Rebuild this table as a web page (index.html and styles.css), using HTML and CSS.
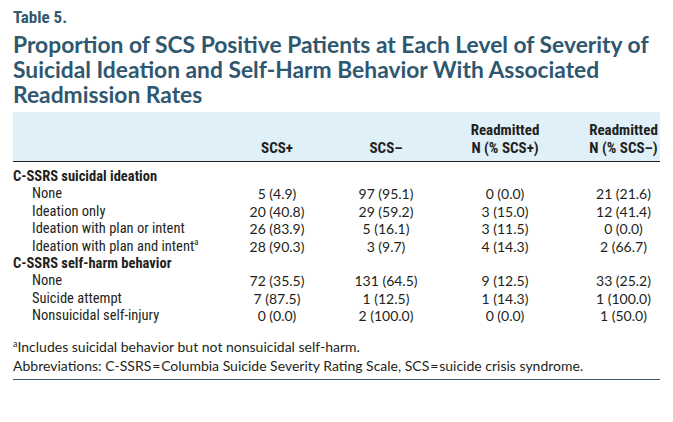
FILE: index.html
```html
<!DOCTYPE html>
<html>
<head>
<meta charset="utf-8">
<link rel="stylesheet" href="styles.css">
</head>
<body>
<div class="page">
  <div class="tlabel">Table 5.</div>
  <h1 class="title">Proportion of SCS Positive Patients at Each Level of Severity of Suicidal Ideation and Self-Harm Behavior With Associated Readmission Rates</h1>
  <table class="data">
    <thead>
      <tr>
        <th class="stub"></th>
        <th class="c2">SCS+</th>
        <th class="c3">SCS&#8211;</th>
        <th class="c4">Readmitted<br>N (% SCS+)</th>
        <th class="c5">Readmitted<br>N (% SCS&#8211;)</th>
      </tr>
    </thead>
    <tbody>
      <tr class="group first"><td class="stub" colspan="5">C-SSRS suicidal ideation</td></tr>
      <tr><td class="stub sub">None</td><td>5 (4.9)</td><td>97 (95.1)</td><td>0 (0.0)</td><td class="c5">21 (21.6)</td></tr>
      <tr><td class="stub sub">Ideation only</td><td>20 (40.8)</td><td>29 (59.2)</td><td>3 (15.0)</td><td class="c5">12 (41.4)</td></tr>
      <tr><td class="stub sub">Ideation with plan or intent</td><td>26 (83.9)</td><td>5 (16.1)</td><td>3 (11.5)</td><td class="c5">0 (0.0)</td></tr>
      <tr><td class="stub sub">Ideation with plan and intent<sup>a</sup></td><td>28 (90.3)</td><td>3 (9.7)</td><td>4 (14.3)</td><td class="c5">2 (66.7)</td></tr>
      <tr class="group"><td class="stub" colspan="5">C-SSRS self-harm behavior</td></tr>
      <tr><td class="stub sub">None</td><td>72 (35.5)</td><td>131 (64.5)</td><td>9 (12.5)</td><td class="c5">33 (25.2)</td></tr>
      <tr><td class="stub sub">Suicide attempt</td><td>7 (87.5)</td><td>1 (12.5)</td><td>1 (14.3)</td><td class="c5">1 (100.0)</td></tr>
      <tr><td class="stub sub">Nonsuicidal self-injury</td><td>0 (0.0)</td><td>2 (100.0)</td><td>0 (0.0)</td><td class="c5">1 (50.0)</td></tr>
    </tbody>
  </table>
  <div class="notes">
    <p><sup>a</sup>Includes suicidal behavior but not nonsuicidal self-harm.</p>
    <p>Abbreviations: C-SSRS&#8202;=&#8202;Columbia Suicide Severity Rating Scale, SCS&#8202;=&#8202;suicide crisis syndrome.</p>
  </div>
</div>
</body>
</html>
```
FILE: styles.css
```css
html, body {
  margin: 0;
  padding: 0;
  background: #ffffff;
}
.page {
  width: 647px;
  padding: 7px 13px 0 13px;
  color: #231f20;
}
.tlabel {
  font-family: "Roboto Condensed", Roboto, sans-serif;
  font-stretch: 75%;
  font-size: 17px;
  font-weight: 700;
  color: #34596f;
  line-height: 20px;
}
.title {
  margin: 5px 0 0 0;
  font-family: Lato, "Open Sans", sans-serif;
  font-weight: 700;
  font-size: 22.8px;
  line-height: 25px;
  color: #2f5870;
}
.data {
  margin-top: 5px;
  width: 647px;
  border-collapse: collapse;
  table-layout: fixed;
}
.data th {
  font-family: "Roboto Condensed", Roboto, sans-serif;
  font-stretch: 75%;
  font-weight: 700;
  font-size: 15px;
  line-height: 18px;
  text-align: center;
  vertical-align: bottom;
  background: #dff0f8;
  padding: 9px 0 4px 0;
  border-bottom: 1.5px solid #231f20;
}
.data th.stub { width: 210px; }
.data th.c2 { width: 108px; }
.data th.c3 { width: 110px; }
.data th.c4 { width: 128px; }
.data th.c5 { width: 91px; padding-left: 18px; box-sizing: border-box; }
.data td {
  font-family: Lato, "Open Sans", sans-serif;
  font-size: 14px;
  line-height: 17.4px;
  text-align: center;
  padding: 0;
}
.data td.c5 { padding-left: 18px; }
.data td.stub {
  font-family: "Roboto Condensed", Roboto, sans-serif;
  font-stretch: 75%;
  font-size: 14.5px;
  text-align: left;
}
.data td.sub { padding-left: 19px; }
.data tr.group td {
  font-weight: 700;
}
.data tr.first td { padding-top: 6px; }
.data sup {
  font-size: 9px;
  line-height: 0;
  vertical-align: 6px;
}
.notes {
  margin-top: 12px;
  padding-bottom: 4px;
  border-bottom: 1.5px solid #34596f;
  font-family: Lato, "Open Sans", sans-serif;
  font-size: 14px;
  line-height: 19px;
}
.notes p { margin: 0; }
.notes sup {
  font-size: 9px;
  line-height: 0;
  vertical-align: 5px;
}
```
